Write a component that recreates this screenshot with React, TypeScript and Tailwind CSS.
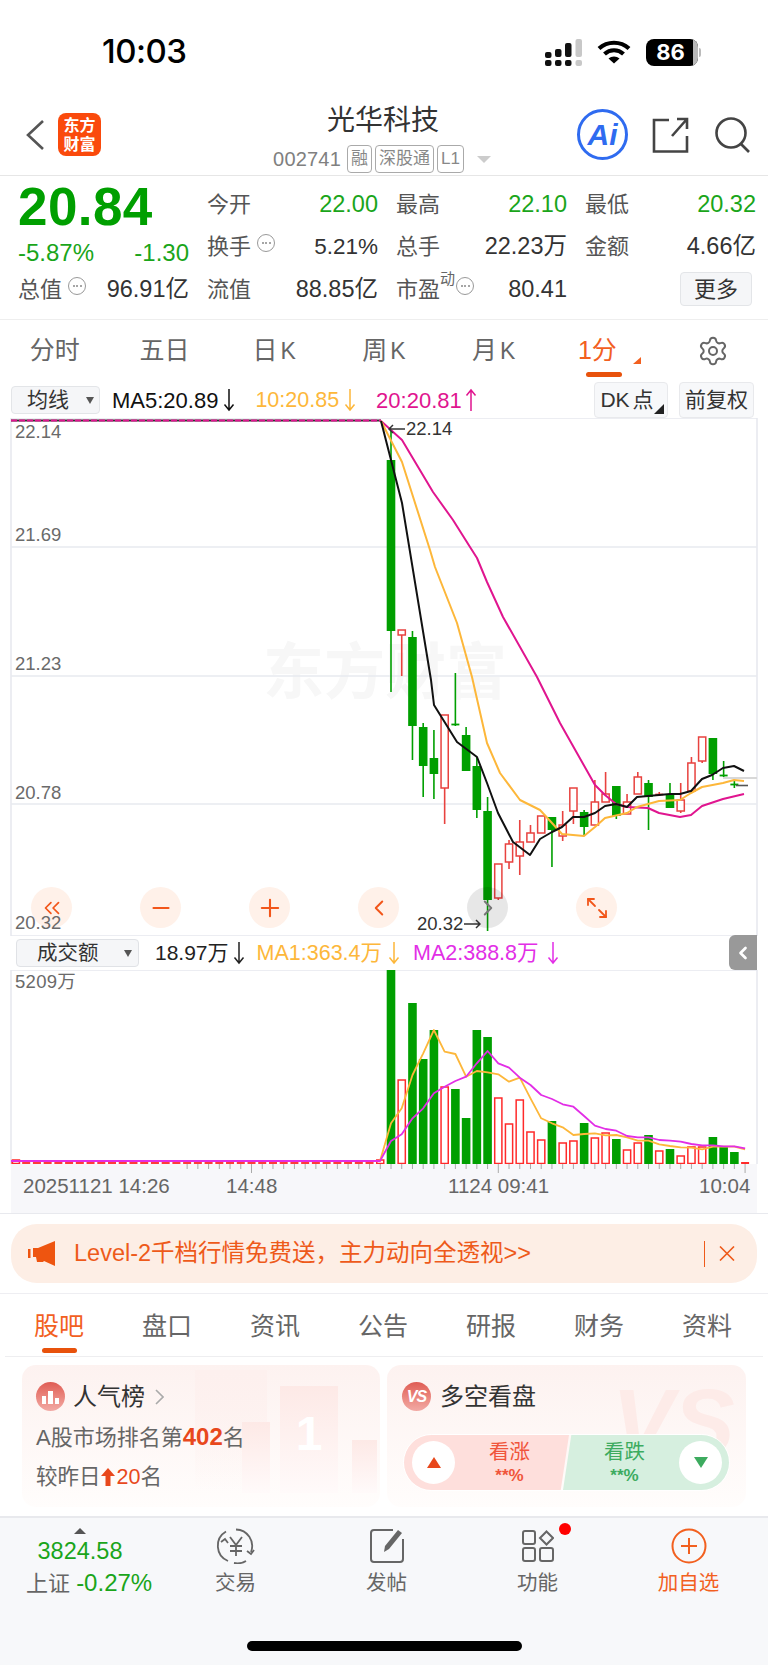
import { ChevronLeft, ChevronRight, ChevronsLeft, Maximize2, Minus, Plus, Settings } from 'lucide-react'

const GREEN = '#009f00'
const RED = '#e8423f'
const X = (i: number) => 391 + 10.73 * i

// wickTop, bodyTop, bodyBottom, wickBottom, colour
const KLINE: [number, number, number, number, 'g' | 'r'][] = [
  [430, 460, 631, 692, 'g'],
  [630, 630, 635, 676, 'r'],
  [631, 637, 726, 760, 'g'],
  [723, 727, 766, 797, 'g'],
  [730, 758, 774, 799, 'g'],
  [715, 715, 788, 824, 'r'],
  [673, 724, 726, 726, 'g'],
  [727, 735, 771, 771, 'g'],
  [757, 766, 810, 818, 'g'],
  [797, 811, 900, 931, 'g'],
  [864, 864, 898, 900, 'r'],
  [840, 844, 862, 869, 'r'],
  [820, 842, 856, 875, 'r'],
  [825, 833, 842, 842, 'r'],
  [816, 816, 833, 833, 'r'],
  [817, 817, 830, 867, 'g'],
  [811, 825, 836, 841, 'r'],
  [788, 788, 811, 824, 'r'],
  [810, 812, 827, 835, 'g'],
  [780, 802, 825, 825, 'r'],
  [772, 794, 802, 802, 'r'],
  [786, 786, 816, 819, 'g'],
  [794, 802, 814, 814, 'r'],
  [772, 777, 794, 794, 'r'],
  [780, 783, 797, 830, 'g'],
  [792, 794, 796, 796, 'r'],
  [783, 794, 808, 808, 'g'],
  [783, 800, 811, 813, 'r'],
  [757, 763, 791, 791, 'r'],
  [737, 737, 761, 763, 'r'],
  [738, 738, 774, 780, 'g'],
  [761, 775, 777, 777, 'g'],
  [781, 784, 785, 788, 'g'],
]

const MA5 = '381,421 402,503 431,680 434,705 457,742 477,757 487,783 498,813 513,842 530,855 540,839 552,832 562,827 573,817 584,817 595,813 605,806 616,804 627,807 637,797 648,796 659,795 670,794 680,794 691,791 702,779 712,775 723,768 734,766 744,771'
const MA10 = '381,421 402,462 430,550 435,567 457,623 472,677 487,743 500,773 520,800 540,810 552,823 562,834 584,836 595,827 605,818 627,813 637,807 659,801 680,800 691,793 702,787 723,783 734,780 744,781'
const MA20 = '381,421 402,440 433,492 453,520 470,547 477,558 487,582 503,617 537,677 560,723 595,785 605,795 616,804 627,807 648,808 659,813 680,817 691,815 702,806 723,799 744,794'

const VOL: [number, 'g' | 'r'][] = [
  [970, 'g'], [1080, 'r'], [1003, 'g'], [1059, 'g'], [1030, 'g'], [1087, 'r'], [1089, 'g'], [1118, 'g'],
  [1030, 'g'], [1037, 'g'], [1098, 'r'], [1124, 'r'], [1100, 'r'], [1132, 'r'], [1140, 'r'], [1121, 'g'],
  [1143, 'r'], [1141, 'r'], [1123, 'g'], [1138, 'r'], [1133, 'r'], [1139, 'g'], [1150, 'r'], [1143, 'r'],
  [1135, 'g'], [1151, 'r'], [1149, 'g'], [1156, 'r'], [1147, 'r'], [1147, 'r'], [1137, 'g'], [1147, 'g'],
  [1152, 'g'], [1162, 'r'],
]
const MA1_Z = [520, 475, 375, 310, 240, 305, 312, 380, 363, 367, 373, 395, 383, 445, 505, 520, 532, 555, 552, 550, 556, 555, 562, 572, 572, 583, 588, 592, 593, 598, 590, 590, 590, 598]
const MA2_Z = [573, 553, 505, 475, 430, 410, 393, 380, 340, 303, 340, 353, 383, 405, 435, 447, 463, 470, 498, 527, 537, 542, 558, 562, 562, 570, 572, 575, 582, 586, 586, 589, 589, 595]
const volLine = (z: number[]) =>
  `11,1161 380,1161 ` + z.map((v, i) => `${X(i).toFixed(1)},${(950 + v / 3).toFixed(1)}`).join(' ')

const FLAT_BARS = Array.from({ length: 34 }, (_, i) => i - 35)
const BIG_FLAT = new Set([-23, -21, -17, -15, -29, -8, -4, -3])

function Arrow({ up, color }: { up?: boolean; color: string }) {
  return (
    <svg width="12" height="24" viewBox="0 0 12 24" fill="none" stroke={color} strokeWidth="1.5" className="shrink-0">
      {up ? <path d="M6 23V2M1.500 7.500L6 2l4.500 5.500" /> : <path d="M6 1v21M1.500 16.500L6 22l4.500-5.500" />}
    </svg>
  )
}

function SideArrow({ left }: { left?: boolean }) {
  return (
    <svg width="17" height="10" viewBox="0 0 17 10" fill="none" stroke="#333" strokeWidth="1.5" className="shrink-0">
      {left ? <path d="M17 5H1M5 1L1 5l4 4" /> : <path d="M0 5h16M12 1l4 4-4 4" />}
    </svg>
  )
}

function Dots() {
  return (
    <span className="inline-flex w-[18px] h-[18px] rounded-full border border-[#999] items-center justify-center gap-[1.5px] shrink-0">
      <i className="w-[2px] h-[2px] rounded-full bg-[#888]" />
      <i className="w-[2px] h-[2px] rounded-full bg-[#888]" />
      <i className="w-[2px] h-[2px] rounded-full bg-[#888]" />
    </span>
  )
}

function Stat({ label, value, green, dots, sup, narrow }: { label: string; value: string; green?: boolean; dots?: boolean; sup?: boolean; narrow?: boolean }) {
  return (
    <div className="flex items-center justify-between h-[42.5px]">
      <div className="flex items-center text-[22px] text-[#555]">
        {label}
        {sup && <span className="text-[15px] -mt-[20px] text-[#666]">动</span>}
        {dots && <span className={`-mt-[20px] ${sup ? 'ml-[1px]' : 'ml-[6px]'}`}><Dots /></span>}
      </div>
      <div className={`${narrow ? 'text-[22.5px]' : 'text-[23.5px]'} ${green ? 'text-[#1aa51a]' : 'text-[#333]'}`}>{value}</div>
    </div>
  )
}

function Tag({ children }: { children: string }) {
  return <span className="h-[28px] px-[3px] flex items-center border border-[#aaa] rounded-[4px] text-[17px] text-[#888]">{children}</span>
}

function RoundBtn({ children, gray }: { children: React.ReactNode; gray?: boolean }) {
  return (
    <div className={`w-[41px] h-[41px] rounded-full flex items-center justify-center ${gray ? 'bg-[#00000018] text-[#777]' : 'bg-[#fff1e9] text-[#f2561a]'}`}>
      {children}
    </div>
  )
}

function NavItem({ label, icon, active }: { label: string; icon: React.ReactNode; active?: boolean }) {
  return (
    <div className="w-[151px] flex flex-col items-center">
      <div className="h-[36px] flex items-center justify-center relative">{icon}</div>
      <div className={`mt-[5px] text-[20.5px] leading-[28px] ${active ? 'text-[#f2601f]' : 'text-[#666]'}`}>{label}</div>
    </div>
  )
}

export default function App() {
  return (
    <div className="w-[768px] h-[1665px] overflow-hidden bg-white font-['Liberation_Sans','Noto_Sans_CJK_SC',sans-serif]">
      {/* status bar */}
      <div className="h-[90px] flex items-center pl-[102px] pr-[67px] pt-[14px] justify-between">
        <span className="text-[33px] font-['Inter'] font-medium tracking-[-0.5px] text-black">10:03</span>
        <div className="flex items-center gap-[15px]">
          <svg width="37" height="27" viewBox="0 0 37 27">
            <g fill="#111">
              <rect x="0" y="13" width="6.500" height="6" rx="2" /><rect x="0" y="21" width="6.500" height="6" rx="2" />
              <rect x="10" y="10" width="6.500" height="8" rx="2" /><rect x="10" y="21" width="6.500" height="6" rx="2" />
              <rect x="20" y="4" width="6.500" height="14" rx="2" /><rect x="20" y="21" width="6.500" height="6" rx="2" />
            </g>
            <g fill="#c8c8c8"><rect x="30.500" y="0" width="6.500" height="18" rx="2" /><rect x="30.500" y="21" width="6.500" height="6" rx="2" /></g>
          </svg>
          <svg width="34" height="24" viewBox="0 0 34 24" fill="none" stroke="#000" strokeWidth="4.200">
            <path d="M2 8.500C10.500 .8 23.500 .8 32 8.500" />
            <path d="M7.500 14C13 9 21 9 26.500 14" />
            <path d="M17 23.500L11.500 18.500C14.500 15.800 19.500 15.800 22.500 18.500Z" fill="#000" stroke="none" />
          </svg>
          <div className="flex items-center">
            <div className="w-[52px] h-[27px] rounded-[8px] bg-[#000] relative overflow-hidden flex items-center justify-center text-white text-[22px] font-bold font-['Inter'] pr-[3px]">
              86
              <i className="absolute right-0 top-0 bottom-0 w-[5px] bg-[#b9b9b9]" />
            </div>
            <i className="ml-[1px] w-[2px] h-[9px] rounded-r-full bg-[#bbb]" />
          </div>
        </div>
      </div>

      {/* title bar */}
      <div className="h-[86px] border-b border-[#e6e6e6] flex items-center relative">
        <div className="flex items-center pl-[25px] gap-[13px] pt-[4px]">
          <svg width="20" height="32" viewBox="0 0 20 32" fill="none" stroke="#555" strokeWidth="2.600"><path d="M18 2L3 16l15 14" /></svg>
          <div className="w-[43px] h-[43px] rounded-[8px] bg-[#fa4a0c] flex flex-col items-center justify-center text-white font-bold text-[16px] leading-[19px]">
            <span>东方</span>
            <span>财富</span>
          </div>
        </div>
        <div className="absolute left-0 right-0 top-[10px] flex flex-col items-center pointer-events-none">
          <div className="text-[28px] leading-[42px] text-[#333] -ml-[2px]">光华科技</div>
          <div className="flex items-center gap-[3px] mt-[2px] -ml-[4px]">
            <span className="text-[20px] text-[#808080] mr-[3px] tracking-[0.2px]">002741</span>
            <Tag>融</Tag>
            <Tag>深股通</Tag>
            <Tag>L1</Tag>
            <i className="ml-[10px] w-0 h-0 border-l-[7px] border-r-[7px] border-t-[7px] border-l-transparent border-r-transparent border-t-[#ccc]" />
          </div>
        </div>
        <div className="ml-auto flex items-center pr-[17px] pt-[4px]">
          <div className="w-[51px] h-[51px] rounded-full border-[3px] border-[#2f6bf0] flex items-center justify-center text-[#2f6bf0] text-[30px] font-bold italic">Ai</div>
          <svg className="ml-[24px]" width="37" height="36" viewBox="0 0 37 36" fill="none" stroke="#444" strokeWidth="2.600">
            <path d="M17 3H2v31.500h33V19" />
            <path d="M35 2L20 19M25 2h10v10" />
          </svg>
          <svg className="ml-[25px]" width="37" height="36" viewBox="0 0 37 36" fill="none" stroke="#444" strokeWidth="2.600">
            <circle cx="17" cy="16" r="14.500" />
            <path d="M27 27l8 8" />
          </svg>
        </div>
      </div>

      {/* quote */}
      <div className="h-[144px] border-b border-[#eeeeee] pl-[18px] pr-[12px] pt-[7px] grid grid-cols-4 gap-x-[18px] content-start">
        <div className="row-span-2 h-[85px]">
          <div className="h-[48px] flex items-center text-[53px] font-bold text-[#009f00] tracking-[0.4px]">20.84</div>
          <div className="flex justify-between items-center text-[24px] text-[#1aa51a] mt-[5px] h-[34px]">
            <span>-5.87%</span>
            <span>-1.30</span>
          </div>
        </div>
        <Stat label="今开" value="22.00" green />
        <Stat label="最高" value="22.10" green />
        <Stat label="最低" value="20.32" green />
        <Stat label="换手" value="5.21%" dots narrow />
        <Stat label="总手" value="22.23万" />
        <Stat label="金额" value="4.66亿" />
        <Stat label="总值" value="96.91亿" dots />
        <Stat label="流值" value="88.85亿" />
        <Stat label="市盈" value="80.41" dots sup />
        <div className="flex items-center justify-end h-[42.5px] pr-[4px]">
          <div className="w-[72px] h-[34px] rounded-[4px] bg-[#f5f6f8] border border-[#e3e5e8] flex items-center justify-center text-[22px] text-[#333]">更多</div>
        </div>
      </div>

      {/* period tabs */}
      <div className="h-[62px] flex text-[25px] text-[#666] items-center">
        {['分时', '五日'].map(t => <div key={t} className="w-[110px] text-center">{t}</div>)}
        {['日', '周', '月'].map(t => (
          <div key={t} className="w-[110px] text-center">{t}<span className="ml-[3px] text-[23px]">K</span></div>
        ))}
        <div className="w-[110px] h-full relative flex items-center justify-center text-[#f2601f] pr-[12px]">
          1分
          <svg className="absolute left-[84px] top-[37px]" width="8" height="7"><path d="M8 0v7H0z" fill="#f2601f" /></svg>
          <i className="absolute left-[37px] top-[52px] w-[36px] h-[5px] rounded-full bg-[#e8520c]" />
        </div>
        <div className="w-[110px] flex justify-center"><Settings size={32} strokeWidth={1.5} color="#666" /></div>
      </div>

      {/* MA row */}
      <div className="h-[36px] pl-[11px] pr-[14px] flex items-center text-[22px]">
        <div className="w-[89px] h-[28px] rounded-[4px] bg-[#f5f6f8] border border-[#e3e5e8] flex items-center pl-[15px] text-[#333] text-[21px] relative">
          均线
          <i className="absolute right-[5px] top-[10px] w-0 h-0 border-l-[4px] border-r-[4px] border-t-[7px] border-l-transparent border-r-transparent border-t-[#555]" />
        </div>
        <span className="ml-[12px] text-[#111]">MA5:20.89</span>
        <span className="ml-[5px]"><Arrow color="#111" /></span>
        <span className="ml-[20px] text-[#fdb73a] text-[21.5px]">10:20.85</span>
        <span className="ml-[5px]"><Arrow color="#fdb73a" /></span>
        <span className="ml-[20px] text-[#e0158f] text-[22px]">20:20.81</span>
        <span className="ml-[3px]"><Arrow up color="#e0158f" /></span>
        <div className="ml-auto w-[74px] h-[36px] rounded-[4px] bg-[#f7f8fa] border border-[#e8e9ec] flex items-center justify-center text-[#333] text-[21px] relative pr-[8px]">
          DK<span className="ml-[3px]">点</span>
          <svg className="absolute right-[3px] bottom-[3px]" width="10" height="10"><path d="M10 0v10H0z" fill="#222" /></svg>
        </div>
        <div className="ml-[11px] w-[75px] h-[36px] rounded-[4px] bg-[#f7f8fa] border border-[#e8e9ec] flex items-center justify-center text-[#333] text-[21px]">前复权</div>
      </div>

      {/* candle chart */}
      <div className="h-[518px] relative">
        <div className="absolute left-[263px] top-[220px] text-[61px] leading-[70px] font-bold text-[#f7f7f7] whitespace-nowrap">东方财富</div>
        <svg className="absolute inset-0" width="768" height="518" viewBox="0 418 768 518" fill="none">
          <path d="M11 418H757M11 418V936M757 418V936M11 936H757" stroke="#e6e8ee" strokeWidth="1.500" />
          <path d="M11 547H757M11 676H757M11 804H757" stroke="#e8eaf0" strokeWidth="1.500" />
          <path d="M723 778H757" stroke="#d8d8d8" strokeWidth="2" />
          <path d="M11 420.500H381" stroke="#333" strokeWidth="2" />
          <path d="M11 420.500H381" stroke="#e0158f" strokeWidth="2" strokeDasharray="6 2" />
          {KLINE.map(([wt, bt, bb, wb, c], i) => {
            const x = X(i)
            const col = c === 'g' ? GREEN : RED
            const flat = bb - bt <= 2
            return (
              <g key={i}>
                <path d={`M${x} ${wt}V${wb}`} stroke={col} strokeWidth="1.600" />
                {flat ? (
                  <path d={`M${x - 4} ${bt + 0.5}H${x + 4}`} stroke={col} strokeWidth="1.800" />
                ) : c === 'g' ? (
                  <rect x={x - 4.3} y={bt} width="8.600" height={bb - bt} fill={GREEN} />
                ) : (
                  <rect x={x - 3.6} y={bt} width="7.200" height={bb - bt} fill="#fff" stroke={RED} strokeWidth="1.500" />
                )}
              </g>
            )
          })}
          <path d="M736 785.500H748" stroke="#555" strokeWidth="1.600" />
          <polyline points={MA20} stroke="#e0158f" strokeWidth="2" strokeLinejoin="round" />
          <polyline points={MA10} stroke="#fdb73a" strokeWidth="2" strokeLinejoin="round" />
          <polyline points={MA5} stroke="#111" strokeWidth="2" strokeLinejoin="round" />
        </svg>
        <div className="absolute left-[31px] top-[469px] flex gap-[68px]">
          <RoundBtn><ChevronsLeft size={26} strokeWidth={1.6} /></RoundBtn>
          <RoundBtn><Minus size={26} strokeWidth={1.8} /></RoundBtn>
          <RoundBtn><Plus size={28} strokeWidth={1.8} /></RoundBtn>
          <RoundBtn><ChevronLeft size={26} strokeWidth={1.8} /></RoundBtn>
          <RoundBtn gray><ChevronRight size={26} strokeWidth={1.8} /></RoundBtn>
          <RoundBtn><Maximize2 size={24} strokeWidth={1.8} className="rotate-90" /></RoundBtn>
        </div>
        <span className="absolute left-[15px] top-[4px] text-[18.5px] leading-[20px] text-[#6a6a6a]">22.14</span>
        <span className="absolute left-[15px] top-[107px] text-[18.5px] leading-[20px] text-[#6a6a6a]">21.69</span>
        <span className="absolute left-[15px] top-[236px] text-[18.5px] leading-[20px] text-[#6a6a6a]">21.23</span>
        <span className="absolute left-[15px] top-[365px] text-[18.5px] leading-[20px] text-[#6a6a6a]">20.78</span>
        <span className="absolute left-[15px] top-[495px] text-[18.5px] leading-[20px] text-[#6a6a6a]">20.32</span>
        <div className="absolute left-[388px] top-[1px] flex items-center gap-[1px] text-[18.5px] leading-[20px] text-[#333]">
          <SideArrow left />
          22.14
        </div>
        <div className="absolute left-[417px] top-[496px] flex items-center gap-[1px] text-[18.5px] leading-[20px] text-[#333]">
          20.32
          <SideArrow />
        </div>
      </div>

      {/* volume row */}
      <div className="h-[34px] pl-[16px] flex items-center text-[21px] relative">
        <div className="w-[123px] h-[28px] rounded-[4px] bg-[#f5f6f8] border border-[#e0e2e6] flex items-center pl-[20px] text-[#333] text-[20.5px] relative">
          成交额
          <i className="absolute right-[6px] top-[10px] w-0 h-0 border-l-[4px] border-r-[4px] border-t-[7px] border-l-transparent border-r-transparent border-t-[#555]" />
        </div>
        <span className="ml-[16px] text-[#222]">18.97万</span>
        <span className="ml-[4px]"><Arrow color="#222" /></span>
        <span className="ml-[12px] text-[#fdb73a] text-[21.5px]">MA1:363.4万</span>
        <span className="ml-[6px]"><Arrow color="#fdb73a" /></span>
        <span className="ml-[13px] text-[#e22ee6] text-[21.5px]">MA2:388.8万</span>
        <span className="ml-[8px]"><Arrow color="#e22ee6" /></span>
        <div className="absolute right-[11px] -top-[1px] w-[28px] h-[35px] rounded-l-[6px] bg-[#999] flex items-center justify-center">
          <ChevronLeft size={20} strokeWidth={3.2} color="#fff" />
        </div>
      </div>

      {/* volume chart */}
      <div className="h-[194px] relative">
        <svg className="absolute inset-0" width="768" height="194" viewBox="0 970 768 194" fill="none">
          <path d="M11 970H757M11 970V1164M757 970V1164" stroke="#e6e8ee" strokeWidth="1.500" />
          {FLAT_BARS.map(i => {
            const h = BIG_FLAT.has(i) ? 4 : 2
            return <rect key={i} x={X(i) - 4} y={1164 - h} width="8" height={h} fill="#ff3b3b" />
          })}
          <rect x={X(-35) - 3} y={1160} width="7" height="3.500" fill="#fff" stroke="#ff2a2a" strokeWidth="1.500" />
          <rect x={X(-1) - 3.5} y={1160} width="7" height="3.500" fill="#fff" stroke="#ff2a2a" strokeWidth="1.500" />
          {VOL.map(([top, c], i) => {
            const x = X(i)
            return c === 'g' ? (
              <rect key={i} x={x - 4.3} y={top} width="8.600" height={1164 - top} fill={GREEN} />
            ) : i === 33 ? (
              <rect key={i} x={x - 4} y={top} width="8" height={1164 - top} fill="#ff2a2a" />
            ) : (
              <rect key={i} x={x - 3.6} y={top} width="7.200" height={1163.5 - top} fill="#fff" stroke="#ff2a2a" strokeWidth="1.500" />
            )
          })}
          <polyline points={volLine(MA1_Z)} stroke="#fdb73a" strokeWidth="1.800" strokeLinejoin="round" />
          <polyline points={volLine(MA2_Z)} stroke="#e22ee6" strokeWidth="1.800" strokeLinejoin="round" />
        </svg>
        <span className="absolute left-[15px] top-[2px] text-[18.5px] leading-[20px] text-[#6a6a6a] tracking-[0.3px]">5209万</span>
      </div>

      {/* time axis */}
      <div className="h-[50px] border-b border-[#e8e9ee] relative">
        <div className="absolute left-[11px] right-[11px] top-0 bottom-0 bg-[#f7f7fa]" />
        <svg className="absolute inset-0" width="768" height="20" viewBox="0 1164 768 20" fill="none">
          {Array.from({ length: 53 }, (_, k) => k - 19).map(i => (
            <path key={i} d={`M${X(i)} 1164V${i === -13 || i === 10 || i === 33 ? 1173 : 1169}`} stroke="#aaa" strokeWidth="1" />
          ))}
        </svg>
        <div className="relative h-full text-[20.5px] text-[#666] leading-[43px]">
          <span className="absolute left-[23px]">20251121 14:26</span>
          <span className="absolute left-[226px]">14:48</span>
          <span className="absolute left-[448px]">1124 09:41</span>
          <span className="absolute left-[699px]">10:04</span>
        </div>
      </div>

      {/* banner */}
      <div className="h-[80px] border-b border-[#eeeef2] px-[11px] pt-[10px]">
        <div className="h-[59px] rounded-[26px] bg-[#fdeee5] flex items-center pl-[17px] pr-[22px] text-[#ee5a1a]">
          <svg width="28" height="25" viewBox="0 0 28 25" fill="#ee5510">
            <rect x="0" y="8" width="2.500" height="9" />
            <path d="M5 7h5L27 0v25l-11-5-1 1H9l-1-5H5z" />
          </svg>
          <span className="ml-[18px] text-[23.5px] whitespace-nowrap">Level-2千档行情免费送，主力动向全透视&gt;&gt;</span>
          <i className="ml-auto w-[1px] h-[26px] bg-[#ee5a1a]" />
          <svg className="ml-[14px]" width="16" height="15" viewBox="0 0 16 15" fill="none" stroke="#ee5a1a" strokeWidth="1.600"><path d="M1 .5L15 14.500M15 .5L1 14.500" /></svg>
        </div>
      </div>

      {/* info tabs */}
      <div className="h-[63px] border-b border-[#eeeef0] mx-[5px] flex text-[25px] text-[#666] relative items-center pt-[4px] pb-[0px]">
        {['股吧', '盘口', '资讯', '公告', '研报', '财务', '资料'].map((t, i) => (
          <div key={t} className={`w-[108px] text-center ${i === 0 ? 'text-[#f2601f]' : ''}`}>{t}</div>
        ))}
        <i className="absolute left-[37px] top-[54px] w-[35px] h-[5px] rounded-full bg-[#e8520c]" />
      </div>

      {/* cards */}
      <div className="h-[159px] pl-[22px] pr-[22px] pt-[8px] flex gap-[7px]">
        <div className="w-[358px] h-[142px] rounded-[14px] bg-linear-to-b from-[#fdf2f0] to-[#fffdfc] relative overflow-hidden pl-[14px] pt-[17px]">
          <div className="absolute left-[173px] top-[5px] w-[72px] h-[120px] bg-linear-to-b from-[#fdf0ee] to-transparent" />
          <div className="absolute left-[220px] top-[57px] w-[28px] h-[71px] bg-linear-to-b from-[#fde9e6] to-[#fffafa]" />
          <div className="absolute left-[258px] top-[21px] w-[58px] h-[107px] bg-linear-to-b from-[#fde9e6] to-[#fffafa] flex justify-center">
            <span className="text-[48px] leading-[56px] font-bold text-white mt-[20px]">1</span>
          </div>
          <div className="absolute left-[330px] top-[75px] w-[25px] h-[53px] bg-linear-to-b from-[#fde9e6] to-[#fffafa]" />
          <div className="relative flex items-center h-[29px]">
            <div className="w-[29px] h-[29px] rounded-full bg-linear-to-b from-[#df5c54] to-[#f2aaa5] flex items-center justify-center">
              <svg width="17" height="14" viewBox="0 0 17 14" fill="#fff"><rect x="0" y="6" width="4" height="8" /><rect x="6" y="1" width="5" height="13" /><rect x="13" y="8" width="4" height="6" /></svg>
            </div>
            <span className="ml-[8px] text-[24px] text-[#333]">人气榜</span>
            <svg className="ml-[10px]" width="9" height="16" viewBox="0 0 9 16" fill="none" stroke="#aaa" strokeWidth="1.600"><path d="M1 1l7 7-7 7" /></svg>
          </div>
          <div className="relative mt-[12px] text-[22px] leading-[28px] text-[#666] whitespace-nowrap">A股市场排名第<b className="text-[24px] text-[#e8481c]">402</b>名</div>
          <div className="relative mt-[11px] text-[21.5px] leading-[28px] text-[#666] flex items-center whitespace-nowrap">
            较昨日
            <svg width="14" height="18" viewBox="0 0 14 18" fill="#e8481c"><path d="M7 0l7 8H9.500v10h-5V8H0z" /></svg>
            <span className="text-[#e8481c] ml-[2px]">20</span>名
          </div>
        </div>
        <div className="w-[359px] h-[142px] rounded-[14px] bg-linear-to-b from-[#fdf2f0] to-[#fffdfc] relative overflow-hidden pl-[15px] pt-[17px]">
          <div className="absolute left-[225px] top-[2px] text-[92px] leading-[110px] font-bold italic text-[#fdebe8]">VS</div>
          <div className="relative flex items-center h-[29px]">
            <div className="w-[29px] h-[29px] rounded-full bg-linear-to-b from-[#df5c54] to-[#f2aaa5] flex items-center justify-center text-white text-[16px] font-bold italic tracking-[-1px]">VS</div>
            <span className="ml-[9px] text-[24px] text-[#333]">多空看盘</span>
          </div>
          <div className="relative mt-[23px] ml-[1px] w-[327px] h-[57px] rounded-full overflow-hidden flex border border-white">
            <div className="w-[165px] bg-[#fedfdc] [clip-path:polygon(0_0,100%_0,95%_100%,0_100%)] flex items-center pl-[8px]">
              <div className="w-[43px] h-[43px] rounded-full bg-white flex items-center justify-center shrink-0">
                <svg width="14" height="11"><path d="M7 0l7 11H0z" fill="#e8481c" /></svg>
              </div>
              <div className="ml-[34px] flex flex-col items-center text-[#f0553b]">
                <span className="text-[20.5px] leading-[26px]">看涨</span>
                <span className="text-[17px] leading-[22px] font-bold">**%</span>
              </div>
            </div>
            <div className="flex-1 -ml-[6px] bg-[#d6efdf] [clip-path:polygon(5%_0,100%_0,100%_100%,0_100%)] flex items-center justify-between pr-[7px] pl-[41px]">
              <div className="flex flex-col items-center text-[#3dab5f]">
                <span className="text-[20.5px] leading-[26px]">看跌</span>
                <span className="text-[17px] leading-[22px] font-bold">**%</span>
              </div>
              <div className="w-[43px] h-[43px] rounded-full bg-white flex items-center justify-center">
                <svg width="14" height="11"><path d="M0 0h14L7 11z" fill="#3dab5f" /></svg>
              </div>
            </div>
          </div>
        </div>
      </div>

      {/* bottom nav */}
      <div className="h-[149px] bg-[#f7f8fa] border-t-2 border-[#e8e9ed] relative">
        <div className="flex pt-[10px]">
          <div className="w-[160px] flex flex-col items-center">
            <i className="w-0 h-0 border-l-[6px] border-r-[6px] border-b-[6px] border-l-transparent border-r-transparent border-b-[#555]" />
            <span className="text-[23.5px] leading-[26px] text-[#1aa51a] mt-[4px]">3824.58</span>
            <div className="self-start ml-[26px] mt-[5px] leading-[28px] whitespace-nowrap">
              <span className="text-[22px] text-[#666]">上证 </span>
              <span className="text-[24px] text-[#1aa51a]">-0.27%</span>
            </div>
          </div>
          <NavItem label="交易" icon={
            <svg width="40" height="36" viewBox="0 0 40 36" fill="none" stroke="#666" strokeWidth="1.800">
              <path d="M10 3.500A16.500 16.500 0 0 0 12 33" />
              <path d="M20 1.500A16.500 16.500 0 0 1 35 24M30 33a17 17 0 0 1-12 2" />
              <path d="M14 9l6 8 6-8M20 17v11M14 18h12M14 23h12" />
              <path d="M5 14l4-3 3 4M31 23l4 3 3-4" />
            </svg>
          } />
          <NavItem label="发帖" icon={
            <svg width="36" height="36" viewBox="0 0 36 36" fill="none" stroke="#666" strokeWidth="2">
              <path d="M24 2H5a3 3 0 0 0-3 3v26a3 3 0 0 0 3 3h26a3 3 0 0 0 3-3V11" />
              <path d="M15 24l1-6L29 2l4 3-13 16z" fill="#666" stroke="none" />
            </svg>
          } />
          <NavItem label="功能" icon={
            <>
              <svg width="32" height="32" viewBox="0 0 32 32" fill="none" stroke="#666" strokeWidth="2">
                <rect x="1" y="1" width="12" height="13" rx="2" />
                <rect x="1" y="18" width="12" height="13" rx="2" />
                <rect x="18" y="18" width="13" height="13" rx="2" />
                <path d="M24.500 1.500L31 8l-6.500 6.500L18 8z" />
              </svg>
              <i className="absolute left-[37px] -top-[5px] w-[12px] h-[12px] rounded-full bg-[#f00]" />
            </>
          } />
          <NavItem active label="加自选" icon={
            <svg width="36" height="36" viewBox="0 0 36 36" fill="none" stroke="#f2601f" strokeWidth="2">
              <circle cx="18" cy="18" r="16.500" />
              <path d="M18 10v16M10 18h16" />
            </svg>
          } />
        </div>
        <i className="absolute left-[247px] top-[123px] w-[275px] h-[10px] rounded-full bg-black" />
      </div>
    </div>
  )
}
